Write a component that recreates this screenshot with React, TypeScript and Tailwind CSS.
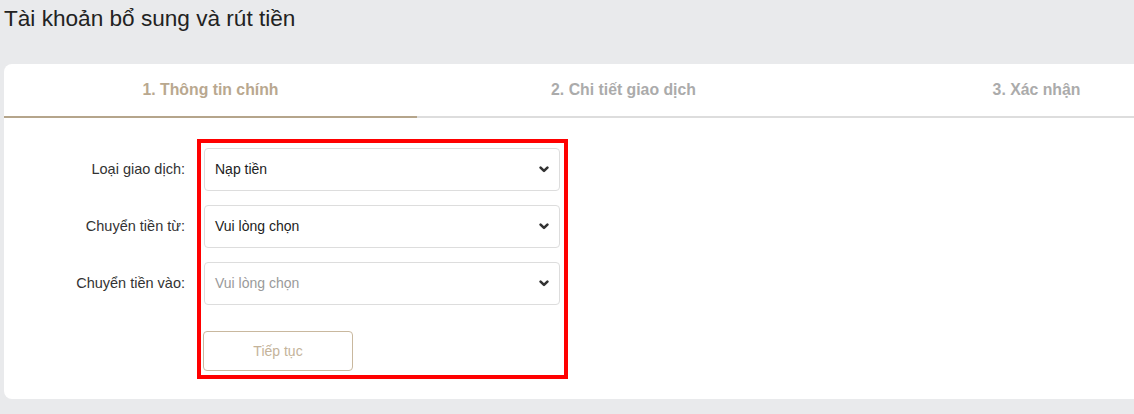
const tabs = [
  { label: '1. Thông tin chính', active: true },
  { label: '2. Chi tiết giao dịch', active: false },
  { label: '3. Xác nhận', active: false }
]

const fields = [
  { label: 'Loại giao dịch:', value: 'Nạp tiền', placeholder: false },
  { label: 'Chuyển tiền từ:', value: 'Vui lòng chọn', placeholder: false },
  { label: 'Chuyển tiền vào:', value: 'Vui lòng chọn', placeholder: true }
]

const Chevron = () => (
  <svg width="10" height="7" viewBox="0 0 10 7" className="text-[#333]">
    <polyline points="1.6,1.6 5,4.9 8.4,1.6" fill="none" stroke="currentColor" strokeWidth="2.6" strokeLinecap="round" strokeLinejoin="round" />
  </svg>
)

const App = () => {
  return (
    <div className="w-[1134px] h-[414px] overflow-hidden bg-[#e9eaec] font-['Liberation_Sans',Arial,sans-serif]">
      <h1 className="h-[64px] pl-[4px] pt-[5px] text-[22.6px] leading-[28px] text-[#222]">
        Tài khoản bổ sung và rút tiền
      </h1>

      <div className="ml-[4px] w-[1239px] rounded-lg bg-white">
        {/* Steps */}
        <div className="flex">
          {tabs.map((tab) => (
            <div
              key={tab.label}
              className={`flex h-[54px] flex-1 items-center justify-center border-b-2 pb-[1px] text-[15.8px] font-bold ${
                tab.active ? 'border-[#b5a58b] text-[#b9a88f]' : 'border-[#dddddd] text-[#ababab]'
              }`}
            >
              {tab.label}
            </div>
          ))}
        </div>

        {/* Form */}
        <div className="relative pt-[30px] pb-[28px]">
          <div className="flex flex-col gap-[14px]">
            {fields.map((field) => (
              <div key={field.label} className="flex items-center">
                <label className="w-[182px] pr-[1px] text-right text-[14.5px] text-[#333]">
                  {field.label}
                </label>
                <div className="ml-[18px] flex h-[43px] w-[356px] items-center justify-between rounded border border-[#dddddd] pl-[10px] pr-[10px]">
                  <span className={`text-[14px] ${field.placeholder ? 'text-[#9a9a9a]' : 'text-[#222]'}`}>
                    {field.value}
                  </span>
                  <Chevron />
                </div>
              </div>
            ))}
          </div>

          <div className="ml-[199px] mt-[26px]">
            <button className="h-[40px] w-[150px] rounded border border-[#c9b89e] bg-white text-[14px] text-[#c4b39a]">
              Tiếp tục
            </button>
          </div>

          {/* highlight frame */}
          <div className="pointer-events-none absolute left-[193px] top-[21px] h-[240px] w-[371px] border-4 border-[#ff0000]" />
        </div>
      </div>
    </div>
  )
}

export default App
